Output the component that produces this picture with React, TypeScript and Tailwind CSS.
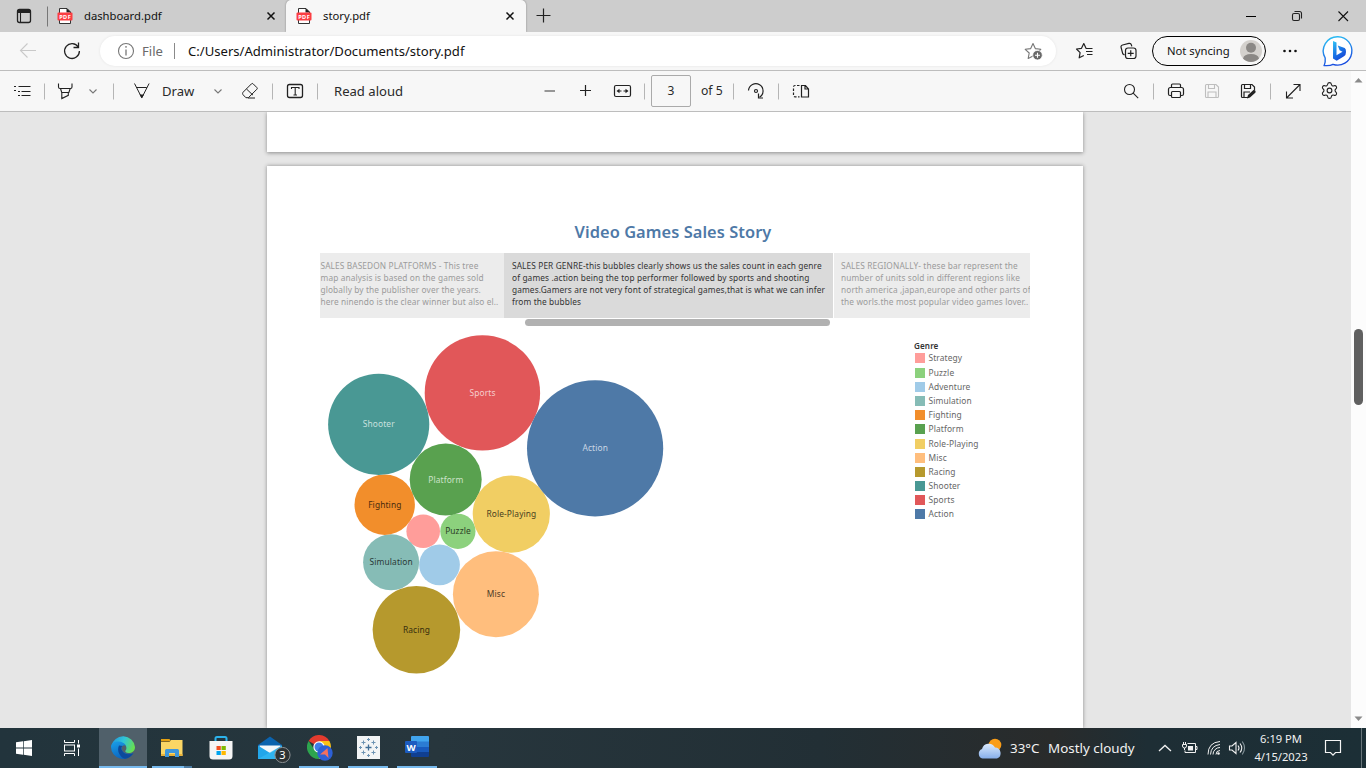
import React from "react";
import { Settings } from "lucide-react";

const noto = "font-['Noto_Sans',sans-serif]";

function Cell({ x, y, w, h, children }: { x: number; y: number; w: number; h: number; children?: React.ReactNode }) {
  return (
    <svg className="block shrink-0" width={w} height={h} viewBox={`${x} ${y} ${w} ${h}`} fill="none" stroke="#222" strokeWidth="1.1">
      {children}
    </svg>
  );
}

function PdfIcon() {
  return (
    <svg className="block shrink-0" width="16" height="18" viewBox="0 0 16 18" fill="none">
      <path d="M2.5 1.5h7.5l3.5 3.5v11.500h-11z" fill="#fff" stroke="#333" />
      <path d="M9.500 1v4.500h4.500z" fill="#222" />
      <rect x="0.500" y="5.500" width="15" height="8" rx="1" fill="#fb3e43" />
      <text x="8.200" y="11.500" textAnchor="middle" fontSize="5.600" fontWeight="700" fill="#fff" fontFamily="Noto Sans" letterSpacing="0.500">PDF</text>
    </svg>
  );
}

function Close() {
  return (
    <svg className="block shrink-0" width="10" height="10" viewBox="0 0 10 10" stroke="#111" strokeWidth="1.5">
      <path d="M1.500 1.500l7 7M8.500 1.500l-7 7" />
    </svg>
  );
}

function TabStrip() {
  return (
    <div className="flex h-8 w-full bg-[#cdcdcd]">
      <Cell x={0} y={0} w={48} h={32}>
        <rect x="17.500" y="9.500" width="13" height="13" rx="2" strokeWidth="1.300" />
        <path d="M17.500 11.500h13" strokeWidth="3" />
        <path d="M20.500 12v10" />
        <path d="M47.500 6.500v20" stroke="#777" strokeWidth="1" />
      </Cell>
      <div className="flex w-[238px] items-center pr-[10px] pl-[9px]">
        <PdfIcon />
        <span className="ml-[11px] flex-1 text-[11.25px] leading-4">dashboard.pdf</span>
        <Close />
      </div>
      <div className="flex w-[240px] items-center rounded-t-[5px] bg-[#f7f7f7] pr-[11px] pl-[10px] shadow-[0_0_2px_rgba(0,0,0,0.4)]">
        <PdfIcon />
        <span className="ml-[11px] flex-1 text-[11.25px] leading-4">story.pdf</span>
        <Close />
      </div>
      <Cell x={526} y={0} w={40} h={32}>
        <path d="M536.500 15.500h14M543.500 8.500v14" strokeWidth="1.200" />
      </Cell>
      <div className="flex-1" />
      <Cell x={1228} y={0} w={138} h={32}>
        <path d="M1246 16.500h10" strokeWidth="1" stroke="#000" />
        <rect x="1292.500" y="13.500" width="7" height="7" rx="1.500" />
        <path d="M1294.500 11.500h5a2 2 0 0 1 2 2v5" />
        <path d="M1338.500 11.500l9.500 9.500M1348 11.500l-9.500 9.500" stroke="#111" />
      </Cell>
    </div>
  );
}

function BingIcon() {
  return (
    <svg className="block shrink-0" width="46" height="38" viewBox="1320 32 46 38">
      <defs>
        <linearGradient id="ring" x1="0" y1="0" x2="0.300" y2="1">
          <stop offset="0" stopColor="#2cc8f5" />
          <stop offset="1" stopColor="#1b4fe0" />
        </linearGradient>
        <linearGradient id="bee" x1="0" y1="0" x2="0.600" y2="1">
          <stop offset="0" stopColor="#32c5f5" />
          <stop offset="0.550" stopColor="#1a78e6" />
          <stop offset="1" stopColor="#1746d8" />
        </linearGradient>
      </defs>
      <path d="M1338 36.700a14.200 14.200 0 1 1 -5 27.600 q-3 1.700 -8.800 1.200 q1.400 -3 1 -7.500 a14.200 14.200 0 0 1 12.800 -21.300z" fill="#fff" stroke="url(#ring)" strokeWidth="1.400" />
      <path d="M1333 41l3.500 1.600v12.600l6-3.500-2.900-1.500-1.900-4.700 7 2.500q1.500 1 1.300 4 0 3-2 4.200l-7.300 4.500-3.700-2.200z" fill="url(#bee)" />
    </svg>
  );
}

function AddressBar() {
  return (
    <div className="flex h-[39px] w-full items-center border-b border-[#bdbdbd] bg-[#f7f7f7]">
      <Cell x={0} y={32} w={100} h={38}>
        <path d="M36 50.500h-15.500M27.500 43.500l-7 7l7 7" stroke="#c9c9c9" />
        <path d="M78.300 47.200a7.400 7.400 0 1 0 1.100 3.800" strokeWidth="1.300" />
        <path d="M78.500 42.500v5h-5" strokeWidth="1.300" />
      </Cell>
      <div className="flex h-[30px] w-[956px] items-center rounded-full bg-white shadow-[0_0_3px_rgba(0,0,0,0.08)]">
        <Cell x={100} y={36} w={42} h={30}>
          <circle cx="126" cy="51" r="7.500" stroke="#777" />
          <path d="M126 49.500v6M126 46v1.800" stroke="#777" strokeWidth="1.300" />
        </Cell>
        <span className="w-[32px] text-[13.1px] leading-5 text-[#6a6a6a]">File</span>
        <span className="h-4 w-px bg-[#8a8a8a]" />
        <span className="ml-[13px] flex-1 text-[13.1px] leading-5 text-[#111]">C:/Users/Administrator/Documents/story.pdf</span>
        <Cell x={1020} y={36} w={36} h={30}>
          <path d="M1033 43.500l2.300 5.100 5.500.7-4 3.700.9 5.400-4.700-2.500-4.800 2.500 1-5.400-4-3.700 5.500-.7z" stroke="#777" strokeLinejoin="round" />
          <circle cx="1037.500" cy="55.200" r="4.800" fill="#686868" stroke="#fff" strokeWidth="0.800" />
          <path d="M1035 55.200h5M1037.500 52.700v5" stroke="#fff" />
        </Cell>
      </div>
      <Cell x={1056} y={32} w={96} h={38}>
        <path d="M1087.500 48.500l-1.500-.2-2.200-4.800-2.300 4.800-5 .7 3.600 3.600-.9 5.200 4.600-2.300" strokeWidth="1.200" strokeLinejoin="round" />
        <path d="M1086.500 48.500h6M1086 51.500h6.500M1087 54.500h5.500" strokeWidth="1.100" />
        <path d="M1124.500 55l-1.700-1.200-1.700-6.300q-.5-2 1.500-2.500l6.300-1.600q2-.4 2.500 1.500l.4 1.500" strokeWidth="1.200" />
        <rect x="1125.500" y="48" width="10.500" height="10.500" rx="2.500" strokeWidth="1.200" />
        <path d="M1130.750 50.300v6M1127.700 53.300h6" strokeWidth="1.200" />
      </Cell>
      <div className="flex h-[30px] w-[114px] items-center rounded-full border border-black pl-[14px]">
        <span className="w-[73px] text-[11.25px] leading-4 whitespace-nowrap text-[#111]">Not syncing</span>
        <svg className="block shrink-0" width="22" height="22" viewBox="0 0 22 22">
          <circle cx="11" cy="11" r="11" fill="#d4d1cd" />
          <circle cx="11" cy="7.800" r="5" fill="#8b8885" />
          <path d="M3 18.500q1-4.500 8-4.500t8 4.500a11 11 0 0 1-16 0z" fill="#8b8885" />
        </svg>
      </div>
      <Cell x={1266} y={32} w={54} h={38}>
        <g fill="#111" stroke="none">
          <circle cx="1284.500" cy="51" r="1.300" />
          <circle cx="1290" cy="51" r="1.300" />
          <circle cx="1295.500" cy="51" r="1.300" />
        </g>
      </Cell>
      <BingIcon />
    </div>
  );
}

function PdfToolbar() {
  return (
    <div className="flex h-[41px] w-full items-center border-b border-[#bdbdbd] bg-[#f7f7f7] text-[13.1px] leading-5 text-[#2a2a2a]">
      <Cell x={0} y={71} w={162} h={40}>
        <path d="M14 86.500h2M18.500 86.500h12M14 90.500h2M18 91.500h2M21.500 91.500h9M18 95.500h2M21.500 95.500h9" strokeWidth="1.200" />
        <path d="M44.500 83.500v16M113.500 83.500v16" stroke="#b5b5b5" strokeWidth="1" />
        <path d="M58.500 83.500v3.500q0 1.500 1.500 1.500h10.500q1.500 0 1.500-1.500v-3.500M60.500 88.500l1.200 4h7.200l1.300-4M61.800 92.500v6l6.500-3.200v-2.800" />
        <path d="M89.500 89.500l3.500 3.500 3.500-3.500" stroke="#777" />
        <path d="M134.500 83.500l7.300 14.300 7.300-14.300M136.800 87.500h10" strokeWidth="1" />
        <path d="M139.500 94.500h4.600l-2.300 3.800z" fill="#222" stroke="none" />
      </Cell>
      <span className="w-[40px]">Draw</span>
      <Cell x={202} y={71} w={132} h={40}>
        <path d="M214.500 89.500l3.500 3.500 3.500-3.500" stroke="#777" />
        <path d="M243 92.300l8.500-8.500q.8-.7 1.600 0l3.800 3.800q.8.8 0 1.600l-8.500 8.500h-2.500l-2.900-3q-.8-1 0-2.400zM246.500 89l6.500 6.200M248 98h7" strokeWidth="1" />
        <path d="M272.500 83.500v16M317.500 83.500v16" stroke="#b5b5b5" strokeWidth="1" />
        <rect x="287.500" y="84.500" width="15" height="13" rx="2" strokeWidth="1.300" />
        <path d="M291.500 89v-1.500h7.500v1.500M295.200 87.500v7.500M293.500 95h3.500" />
      </Cell>
      <span className="w-[180px]">Read aloud</span>
      <Cell x={514} y={71} w={137} h={40}>
        <path d="M544.500 91h10.500" stroke="#777" strokeWidth="1.500" />
        <path d="M580 90.500h11M585.500 85v11" strokeWidth="1.200" />
        <rect x="614.500" y="85.500" width="16" height="11" rx="1.500" strokeWidth="1.200" />
        <path d="M618 91h3.500M623.500 91h3.500" />
        <path d="M616.500 91l3-2.200v4.400zM628.500 91l-3-2.200v4.400z" fill="#222" stroke="none" />
        <path d="M644.500 83.500v16" stroke="#b5b5b5" strokeWidth="1" />
      </Cell>
      <span className="flex h-8 w-[40px] items-center justify-center rounded-[2px] border border-[#aaa] text-[12px]">3</span>
      <span className="w-[35px] pl-[10px] text-[12.2px] whitespace-nowrap">of 5</span>
      <Cell x={726} y={71} w={100} h={40}>
        <path d="M733.500 83.500v16M778.500 83.500v16" stroke="#b5b5b5" strokeWidth="1" />
        <path d="M748.500 90.500a7.300 7.300 0 1 1 11 6.800" strokeWidth="1.200" />
        <path d="M758.500 93.500v4.500h4.500" strokeWidth="1.200" />
        <circle cx="756" cy="91" r="1.500" strokeWidth="1.200" />
        <path d="M801.500 85.500h4l3 3.500v8h-7zM805 85.500v3.500h3.500" strokeWidth="1.200" />
        <path d="M799.500 85.500h-4.500q-1.500 0-1.500 1.500v8q0 1.800 1.500 1.800h4.500" strokeDasharray="2.500 1.500" strokeWidth="1.200" />
      </Cell>
      <div className="flex-1" />
      <Cell x={1110} y={71} w={210} h={40}>
        <circle cx="1129.500" cy="89.500" r="5" strokeWidth="1.100" />
        <path d="M1133.200 93.200l5 5" strokeWidth="1.100" />
        <path d="M1153.500 83.500v16M1270.500 83.500v16" stroke="#b5b5b5" strokeWidth="1" />
        <path d="M1171.500 87.500v-2.500q0-1 1-1h7q1 0 1 1v2.500M1171.500 95.500h-1.500q-1.500 0-1.500-1.500v-4.500q0-2 2-2h11q2 0 2 2v4.500q0 1.500-1.500 1.500h-1.500" strokeWidth="1.200" />
        <rect x="1171.500" y="91.500" width="9" height="6" rx="1" strokeWidth="1.200" />
        <g stroke="#bebebe">
          <path d="M1205.500 85.500q0-1 1-1h9.500l2.500 2.500v9.500q0 1-1 1h-11q-1 0-1-1zM1208.500 84.500v4h6v-4M1208 97.500v-5.500h8v5.500" />
        </g>
        <path d="M1248 97.500h-5.500q-1 0-1-1v-11q0-1 1-1h9.500l2.500 2.500v3M1244.500 84.500v4h6v-4M1244 97.500v-5.500h6" strokeWidth="1.200" />
        <path d="M1247 98.500l1-3.500 5.500-5q1.500-.5 2 1t-.5 2l-5 4.500z" fill="#222" stroke="none" />
        <path d="M1287 97.500l12.500-12.500M1293.500 84.500h6.500v6.500M1286.500 91.500v6.500h6.500" strokeWidth="1.100" />
      </Cell>
      <Settings className="-mt-[2px] mr-[12px] shrink-0 text-[#222]" size={19} strokeWidth={1.4} />
    </div>
  );
}

const genres: { name: string; color: string; x: number; y: number; r: number; label?: string }[] = [
  { name: "Strategy", color: "#ff9d9a", x: 423.2, y: 531.3, r: 16.8 },
  { name: "Puzzle", color: "#8cd17d", x: 457.9, y: 531.3, r: 17.6, label: "#2b4026" },
  { name: "Adventure", color: "#a0cbe8", x: 439.5, y: 564.8, r: 20.4 },
  { name: "Simulation", color: "#86bcb6", x: 391.1, y: 562.3, r: 28, label: "#293937" },
  { name: "Fighting", color: "#f28e2b", x: 384.7, y: 504.7, r: 30.2, label: "#4a2b0d" },
  { name: "Platform", color: "#59a14f", x: 445.7, y: 479.4, r: 36, label: "#cde3ca" },
  { name: "Role-Playing", color: "#f1ce63", x: 511.3, y: 514.1, r: 38.6, label: "#493f1e" },
  { name: "Misc", color: "#ffbe7d", x: 495.9, y: 594.2, r: 43, label: "#4e3a26" },
  { name: "Racing", color: "#b6992d", x: 416.4, y: 629.7, r: 43.8, label: "#372e0e" },
  { name: "Shooter", color: "#499894", x: 378.7, y: 424.3, r: 50.6, label: "#c8e0df" },
  { name: "Sports", color: "#e15759", x: 482.4, y: 392.9, r: 57.7, label: "#f6cdcd" },
  { name: "Action", color: "#4e79a7", x: 595.1, y: 448.3, r: 68.1, label: "#cad7e5" },
];

function StoryPoint({ lines, className }: { lines: string[]; className: string }) {
  return (
    <div className={`h-[65px] overflow-hidden pt-[7px] text-[8.3px] leading-[12px] tracking-[0.12px] whitespace-nowrap ${className}`}>
      {lines.map((l) => (
        <div key={l}>{l}</div>
      ))}
    </div>
  );
}

function StoryPage() {
  return (
    <div className="mt-[14px] h-[562px] w-[816px] bg-white pl-[53px] shadow-[0_0_4px_rgba(0,0,0,0.4)]">
      <h1 className="w-[706px] pt-[53px] text-center text-[16.4px] leading-[26px] font-semibold tracking-[0.06px] text-[#4e79a7]">Video Games Sales Story</h1>
      <div className="mt-2 flex w-[710px]">
        <StoryPoint
          className="w-[184px] bg-[#ececec] pl-[0.5px] text-[#9b9b9b]"
          lines={["SALES BASEDON PLATFORMS - This tree", "map analysis is based on the games sold", "globally by the publisher over the years.", "here ninendo is the clear winner but also el.."]}
        />
        <StoryPoint
          className="w-[329px] bg-[#dadada] pl-2 text-[#333]"
          lines={["SALES PER GENRE-this bubbles clearly shows us the sales count in each genre", "of games .action being the top performer followed by sports and shooting", "games.Gamers are not very font of strategical games,that is what we can infer", "from the bubbles"]}
        />
        <StoryPoint
          className="ml-px w-[196px] bg-[#ececec] pl-[7px] text-[#9b9b9b]"
          lines={["SALES REGIONALLY- these bar represent the", "number of units sold in different regions like", "north america ,japan,europe and other parts of", "the worls.the most popular video games lover.."]}
        />
      </div>
      <div className="mt-px ml-[205px] h-[7px] w-[305px] rounded-full bg-[#b1b1b1]" />
      <div className="flex">
        <svg className="block shrink-0" width="594" height="360" viewBox="320 326 594 360">
          {genres.map((g) => (
            <g key={g.name}>
              <circle cx={g.x} cy={g.y} r={g.r} fill={g.color} />
              {g.label && (
                <text x={g.x + 0.1} y={g.y + 3.1} textAnchor="middle" fontSize="8.400" letterSpacing="0.120" fontFamily="Noto Sans" fill={g.label}>{g.name}</text>
              )}
            </g>
          ))}
        </svg>
        <div className="pt-[14px] text-[8.4px] tracking-[0.12px]">
          <div className="h-[11.4px] text-[8.1px] leading-[12px] font-semibold text-[#333]">Genre</div>
          {genres.map((g) => (
            <div key={g.name} className="flex h-[14.18px] items-center text-[#666]">
              <span className="ml-px h-[10px] w-[10px]" style={{ backgroundColor: g.color }} />
              <span className="ml-[3.5px] leading-[12px]">{g.name}</span>
            </div>
          ))}
        </div>
      </div>
    </div>
  );
}

function ScrollBar() {
  return (
    <div className="flex w-[15px] shrink-0 flex-col items-center bg-[#fcfcfc]">
      <Cell x={0} y={0} w={15} h={258}>
        <path d="M3.500 11.500l4-4.500 4 4.500z" fill="#8a8a8a" stroke="none" />
      </Cell>
      <div className="h-[76px] w-[9px] rounded-full bg-[#606060]" />
      <div className="flex-1" />
      <Cell x={0} y={0} w={15} h={20}>
        <path d="M3.500 8.500l4 4.500 4-4.500z" fill="#8a8a8a" stroke="none" />
      </Cell>
    </div>
  );
}

function TaskButton({ className, children }: { className: string; children: React.ReactNode }) {
  return <div className={`flex h-10 items-center justify-center ${className}`}>{children}</div>;
}

function Taskbar() {
  return (
    <div className="flex h-10 w-full items-center bg-[linear-gradient(90deg,#22343c_0%,#27363d_32%,#222f35_60%,#292b2b_77%,#1e2e35_84%,#1c2f36_100%)] text-[#f2f2f2]">
      <TaskButton className="w-[48px]">
        <svg width="16" height="16" viewBox="0 0 16 16" fill="#fff">
          <path d="M0 2.300l7-1v6.300h-7zM7.700 1.200l8.300-1.200v7.600h-8.300zM0 8.400h7v6.300l-7-1zM7.700 8.400h8.300v7.600l-8.300-1.200z" />
        </svg>
      </TaskButton>
      <TaskButton className="w-[48px]">
        <svg width="16" height="16" viewBox="0 0 16 16" fill="none" stroke="#fff">
          <path d="M.5 0v2.500h10v-2.500M.5 16v-2.500h10v2.500M14.500 0v3.500M14.500 8.500v7.500" />
          <rect x=".5" y="5" width="10" height="6" />
          <path d="M13 4.500h3v3h-3z" fill="#fff" stroke="none" />
        </svg>
      </TaskButton>
      <TaskButton className="ml-[3px] w-[48px] border-b-2 border-[#76b9ed] bg-[#50606a]">
        <svg width="24" height="24" viewBox="0 0 24 24">
          <defs>
            <linearGradient id="eg" x1="0" y1="0.200" x2="1" y2="0.500">
              <stop offset="0" stopColor="#2298dc" />
              <stop offset="0.500" stopColor="#30c4d8" />
              <stop offset="1" stopColor="#67df50" />
            </linearGradient>
            <linearGradient id="eb" x1="0" y1="0" x2="0.500" y2="1">
              <stop offset="0" stopColor="#1aa0e8" />
              <stop offset="1" stopColor="#0a62bd" />
            </linearGradient>
          </defs>
          <path d="M.3 11a12 12 0 0 1 23.700 1c0 4-3 6-6.500 6-2.500 0-3.700-1-3-2.400 1-1.200 1-2 .8-3.600-.5-3-4-4.500-7.300-4.500-4 0-6.500 1.500-7.700 3.500z" fill="url(#eg)" />
          <path d="M0 12c0-3.500 3-5.500 6.500-5.500 4.500 0 8 2 8.700 5-1-1.500-2.700-1.500-3.700-.5-1.500 1.500-1 4.200 1 6 2.500 2.200 6.500 2.500 10 .7a12 12 0 0 1-22.500-5.700z" fill="url(#eb)" />
          <path d="M8 10.500c-2.500 5 .5 11.500 6 13.300 3.500-.5 6.500-2.500 8.500-5.600-4 2-10 1.500-12-4-.3-1.300.1-2.500 1.200-3.200z" fill="#0c4a9b" />
        </svg>
      </TaskButton>
      <div className="ml-[5px] flex h-10 w-[40px] flex-col items-center">
        <svg className="block h-[38px]" width="22" height="38" viewBox="0 0 22 38">
          <path d="M0 11h8.500l1.500 2.500h-10z" fill="#e6a111" />
          <path d="M0 14h8.500l1.500-2h11.500v16h-21.500z" fill="#fbd665" />
          <path d="M0 26h21.500v2h-21.500z" fill="#e9b23a" />
          <path d="M4 29v-6.500q0-1.500 1.500-1.500h11q1.500 0 1.500 1.500v6.500h-4v-4h-6v4z" fill="#3f97dc" />
        </svg>
        <div className="flex h-[2px] w-full">
          <span className="w-8 bg-[#76b9ed]" />
          <span className="w-2 bg-[#4c7ba2]" />
        </div>
      </div>
      <TaskButton className="ml-1 w-[48px] pl-px">
        <svg width="24" height="24" viewBox="0 0 24 24">
          <path d="M6.500 6v-3.500q0-1.500 1.500-1.500h8q1.500 0 1.500 1.500v3.500" fill="none" stroke="#2cb3ec" strokeWidth="2" />
          <path d="M.5 5h23v15q0 3.500-3.500 3.500h-16q-3.500 0-3.500-3.500z" fill="#f5f5f5" />
          <path d="M7.500 10h4.300v4h-4.300z" fill="#f25022" />
          <path d="M12.500 10h4.300v4h-4.300z" fill="#7fba00" />
          <path d="M7.500 15h4.300v4h-4.300z" fill="#00a4ef" />
          <path d="M12.500 15h4.300v4h-4.300z" fill="#ffb900" />
        </svg>
      </TaskButton>
      <TaskButton className="w-[55px] pl-[6px]">
        <svg width="34" height="30" viewBox="0 0 34 30">
          <path d="M0 12l12-8.500 12 8.500v14h-24z" fill="#0b63ae" />
          <path d="M1.500 12.500h21v9h-21z" fill="#f4f7fa" />
          <path d="M0 12.500l12 7.500 12-7.500v13.500h-24z" fill="#22a6ea" />
          <path d="M24 12.500v13.500h-24z" fill="#38bdf4" opacity=".6" />
          <circle cx="24.500" cy="22" r="7.600" fill="#2d3234" stroke="#8b9093" />
          <text x="24.500" y="26" textAnchor="middle" fontSize="11" fill="#fff" fontFamily="Noto Sans">3</text>
        </svg>
      </TaskButton>
      <TaskButton className="w-[40px] border-b-2 border-[#76b9ed] pt-px pl-[2px]">
        <svg width="26" height="26" viewBox="0 0 26 26">
          <path d="M12 12L1.600 6a12 12 0 0 1 20.800 0z" fill="#e33b2e" />
          <path d="M12 12h12a12 12 0 0 1-12 12z" fill="#fbc116" />
          <path d="M22.400 6h-10.400l6 12 6-6a12 12 0 0 0-1.600-6z" fill="#fbc116" />
          <path d="M1.600 6a12 12 0 0 0 10.400 18l5-9-10-1z" fill="#2da44e" />
          <circle cx="12" cy="12" r="5.700" fill="#fff" />
          <circle cx="12" cy="12" r="4.500" fill="#3f7de8" />
          <circle cx="18" cy="18" r="7.700" fill="#2d60d6" />
          <path d="M13 19.500l7.500-6.500 1 10-3.500-3.500z" fill="#f2705f" />
        </svg>
      </TaskButton>
      <TaskButton className="ml-[9px] w-[40px] border-b-2 border-[#76b9ed]">
        <svg width="23" height="23" viewBox="0 0 23 23" fill="none" stroke="#6c93b3" strokeWidth="1">
          <path d="M0 0h23v23h-23z" fill="#f2f4f5" stroke="none" />
          <path d="M11.500 8.500v6M8.500 11.500h6" stroke="#3f6d96" strokeWidth="1.300" />
          <path d="M6.500 4.500v4M4.500 6.500h4M16.500 4.500v4M14.500 6.500h4M6.500 14.500v4M4.500 16.500h4M16.500 14.500v4M14.500 16.500h4M11.500 2v3M10 3.500h3M11.500 18v3M10 19.500h3M3.500 10v3M2 11.500h3M19.500 10v3M18 11.500h3" />
        </svg>
      </TaskButton>
      <TaskButton className="ml-[9px] w-[40px] border-b-2 border-[#76b9ed]">
        <svg width="24" height="22" viewBox="0 0 24 22">
          <path d="M6 1q0-1 1-1h16q1 0 1 1v5h-18z" fill="#41a5ee" />
          <path d="M6 5.500h18v5.500h-18z" fill="#2b7cd3" />
          <path d="M6 11h18v5h-18z" fill="#185abd" />
          <path d="M6 16h18v4q0 1-1 1h-16q-1 0-1-1z" fill="#103f91" />
          <rect y="5" width="12" height="12" rx="1" fill="#1d5cc0" />
          <text x="6" y="14.600" textAnchor="middle" fontSize="9.500" fontWeight="700" fill="#fff" fontFamily="Noto Sans">W</text>
        </svg>
      </TaskButton>
      <div className="flex-1" />
      <svg className="block shrink-0" width="26" height="24" viewBox="0 0 26 24">
        <defs>
          <linearGradient id="cloud" x1="0" y1="0" x2="0" y2="1">
            <stop offset="0" stopColor="#dcebfd" />
            <stop offset="1" stopColor="#86aeea" />
          </linearGradient>
        </defs>
        <circle cx="17" cy="9" r="6.300" fill="#fa9d18" />
        <path d="M4.500 22.500a5 5 0 0 1-.5-9.500 7 7 0 0 1 13-1.500 5.700 5.700 0 0 1 2 11z" fill="url(#cloud)" />
      </svg>
      <span className="ml-[6px] w-[38px] text-[13.4px] whitespace-nowrap">33°C</span>
      <span className="w-[104px] text-[13.4px] whitespace-nowrap">Mostly cloudy</span>
      <Cell x={1152} y={728} w={98} h={40}>
        <g stroke="#f0f0f0">
          <path d="M1159 751l6-5.500 6 5.500" strokeWidth="1.300" />
          <path d="M1187.500 743.500h8v9h-10.500v-2M1195.500 746.500h1.500v3h-1.500M1182.500 744.500h4v1.500q0 2-2 2t-2-2zM1183.500 742v2M1185.500 742v2M1184.500 748v2" strokeWidth="1" />
          <path d="M1188.500 746.500h4v3.500h-4z" fill="#f0f0f0" />
          <path d="M1216 754.500a4 4 0 0 1 4-4M1213 754.500a7 7 0 0 1 7-7M1210.500 754.500q.5-9 9.500-10M1208 754.500q0-12 12-13" strokeWidth="1" />
          <circle cx="1218.500" cy="753.500" r="1.300" fill="#f0f0f0" stroke="none" />
          <path d="M1229.500 746h2.500l4-3.500v11l-4-3.500h-2.500zM1238 745.500q2 2.500 0 5M1240 743.500q3.500 4.500 0 9" />
          <path d="M1242.300 741.500q4.500 6.500 0 13" stroke="#87969c" />
        </g>
      </Cell>
      <div className="flex w-[62px] flex-col items-center text-[11.2px] leading-[18px] whitespace-nowrap">
        <span>6:19 PM</span>
        <span>4/15/2023</span>
      </div>
      <Cell x={1312} y={728} w={49} h={40}>
        <path d="M1325.500 740.500h15v12h-5l-2.500 2.700-2.500-2.700h-5z" stroke="#f5f5f5" strokeWidth="1.200" />
      </Cell>
      <span className="mr-1 h-10 w-px bg-[#68757a]" />
    </div>
  );
}

export default function App() {
  return (
    <div className={`flex h-[768px] w-[1366px] flex-col overflow-hidden bg-[#e6e6e6] text-[#111] ${noto}`}>
      <TabStrip />
      <AddressBar />
      <div className="flex h-[657px] w-full">
        <div className="flex w-[1351px] flex-col overflow-hidden">
          <PdfToolbar />
          <div className="flex h-[616px] flex-col items-start overflow-hidden pl-[267px]">
            <div className="h-[40px] w-[816px] shrink-0 bg-white shadow-[0_1px_4px_rgba(0,0,0,0.4)]" />
            <StoryPage />
          </div>
        </div>
        <ScrollBar />
      </div>
      <Taskbar />
    </div>
  );
}
